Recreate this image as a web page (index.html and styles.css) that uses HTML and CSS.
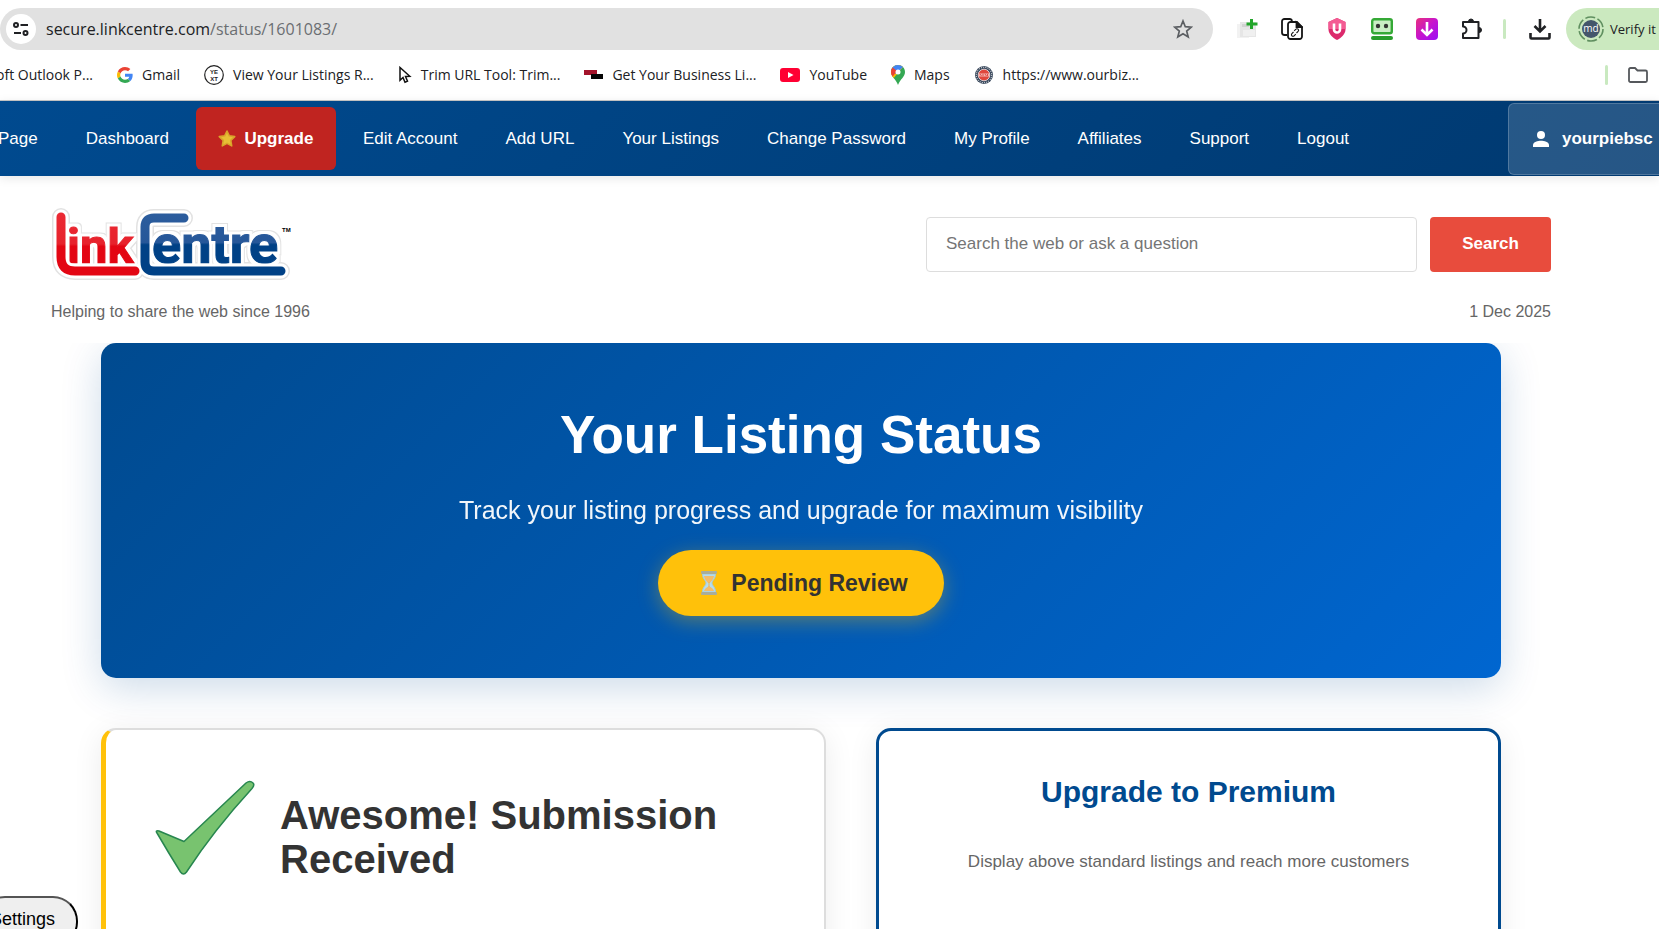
FILE: index.html
```html
<!DOCTYPE html>
<html lang="en">
<head>
<meta charset="utf-8">
<title>Your Listing Status</title>
<link rel="stylesheet" href="styles.css">
</head>
<body>
<div class="window">
  <div class="toolbar">
    <div class="address">
      <button class="site-info" aria-label="Site information">
        <svg width="16" height="16" viewBox="0 0 16 16" fill="none" stroke="#202124" stroke-width="2"><circle cx="3" cy="4" r="2"/><path d="M7.500 4H15M1 12h7"/><circle cx="12.500" cy="12" r="2"/></svg>
      </button>
      <span class="url">secure.linkcentre.com<span class="url-path">/status/1601083/</span></span>
      <svg class="bookmark-star" width="20" height="20" viewBox="0 0 20 20" fill="none" stroke="#5b5e62" stroke-width="1.700"><path d="M10 2l2.300 5.700 6 .5-4.600 3.900 1.500 5.900L10 14.800 4.800 18l1.500-5.900L1.700 8.200l6-.5z"/></svg>
    </div>
    <div class="extensions">
      <svg width="22" height="22" viewBox="0 0 22 22"><path d="M1 6h12v14H1z" fill="#f2f2f2"/><path d="M4 4h16v15H4z" fill="#e6e6e6"/><path d="M6 6h7v3H6z" fill="#d2d2d2"/><path d="M7 12h12v6H7z" fill="#f0f0f0"/><path d="M15.500 1v10M10.500 6h11" stroke="#23a52b" stroke-width="3"/></svg>
      <svg width="22" height="22" viewBox="0 0 22 22" fill="none" stroke="#151515" stroke-width="1.800"><path d="M6 17H3.500A2.500 2.500 0 0 1 1 14.500v-11A2.500 2.500 0 0 1 3.500 1h5A2.500 2.500 0 0 1 11 3"/><path d="M9.500 4H16l5 5v9.500a2.500 2.500 0 0 1-2.500 2.500h-9A2.500 2.500 0 0 1 7 18.500v-12A2.500 2.500 0 0 1 9.500 4z"/><path d="M15.500 4.500V9H21z" fill="#151515"/><path d="M12.500 14l-1.600 1.600a1.500 1.500 0 0 0 2.200 2.200l1.700-1.600M15.500 15l1.600-1.600a1.500 1.500 0 0 0-2.200-2.200l-1.700 1.600" stroke-width="1.100"/></svg>
      <svg width="22" height="22" viewBox="0 0 22 22"><path d="M11 0l8.500 4v7.500C19.500 16 15 20 11 22c-4-2-8.500-6-8.500-10.500V4z" fill="#dc2a6c"/><path d="M11 0l8.500 4v7H2.500V4z" fill="#f45b93"/><path d="M8 5.500v6a3 3 0 0 0 6 0v-6" fill="none" stroke="#fff" stroke-width="2.600"/></svg>
      <svg width="22" height="22" viewBox="0 0 22 22"><rect x="1.200" y="1.200" width="19.600" height="14" rx="2" fill="#c9edc4" stroke="#35a936" stroke-width="2.400"/><circle cx="7" cy="8" r="2.200" fill="#333"/><circle cx="15" cy="8" r="2.200" fill="#333"/><rect y="18" width="22" height="4" rx="2" fill="#289d2b"/></svg>
      <svg width="22" height="22" viewBox="0 0 22 22"><defs><linearGradient id="dl" x1="0" y1="0" x2="1" y2="1"><stop offset="0" stop-color="#e8307c"/><stop offset=".5" stop-color="#c614cf"/><stop offset="1" stop-color="#9a10f5"/></linearGradient></defs><rect width="22" height="22" rx="4" fill="url(#dl)"/><path d="M11 4v13M5.500 11.500L11 17l5.500-5.500" fill="none" stroke="#fff" stroke-width="2.600"/></svg>
      <svg width="22" height="22" viewBox="0 0 22 22" fill="none" stroke="#202124" stroke-width="2" stroke-linejoin="round"><path d="M2 4h15.500v16H2v-4.500a3 3 0 0 0 0-7z"/><path d="M7.500 3.500a2.500 2.500 0 0 1 5 0zM18 9.500a2.500 2.500 0 0 1 0 5z" fill="#202124" stroke-width="1"/></svg>
    </div>
    <span class="divider"></span>
    <svg class="download" width="22" height="22" viewBox="0 0 22 22" fill="none" stroke="#202124" stroke-width="2.600"><path d="M11 1v12M5.500 8L11 13.500 16.500 8M1.500 15v4.500a1 1 0 0 0 1 1h17a1 1 0 0 0 1-1V15"/></svg>
    <button class="profile">
      <svg width="26" height="26" viewBox="0 0 26 26"><circle cx="13" cy="13" r="12" fill="none" stroke="#5f8f5f" stroke-width="1.600" stroke-dasharray="10 2.600"/><circle cx="13" cy="13" r="9" fill="#44566b"/><text x="13" y="16" text-anchor="middle" class="avatar-text">md</text></svg>
      <span>Verify it</span>
    </button>
  </div>

  <div class="bookmarks">
    <a class="bookmark" href="#">oft Outlook P...</a>
    <a class="bookmark" href="#"><svg width="16" height="16" viewBox="0 0 48 48"><path fill="#EA4335" d="M24 9.500c3.540 0 6.710 1.220 9.210 3.600l6.850-6.850C35.900 2.380 30.470 0 24 0 14.620 0 6.510 5.380 2.560 13.220l7.980 6.190C12.430 13.720 17.740 9.500 24 9.500z"/><path fill="#4285F4" d="M46.980 24.550c0-1.570-.15-3.090-.38-4.550H24v9.020h12.940c-.58 2.960-2.260 5.480-4.780 7.180l7.730 6c4.510-4.180 7.090-10.360 7.090-17.650z"/><path fill="#FBBC05" d="M10.530 28.590c-.48-1.450-.76-2.990-.76-4.590s.27-3.140.76-4.590l-7.980-6.190C.92 16.460 0 20.120 0 24c0 3.880.92 7.540 2.560 10.780l7.970-6.190z"/><path fill="#34A853" d="M24 48c6.480 0 11.930-2.130 15.890-5.810l-7.730-6c-2.150 1.450-4.920 2.300-8.160 2.300-6.260 0-11.570-4.220-13.470-9.910l-7.980 6.190C6.510 42.620 14.620 48 24 48z"/></svg>Gmail</a>
    <a class="bookmark" href="#"><svg width="20" height="20" viewBox="0 0 20 20"><circle cx="10" cy="10" r="9.300" fill="#fff" stroke="#222" stroke-width="1.200"/><text x="10" y="9" text-anchor="middle" class="badge-text">YE</text><text x="10" y="16" text-anchor="middle" class="badge-text">XT</text></svg>View Your Listings R...</a>
    <a class="bookmark" href="#"><svg width="14" height="18" viewBox="0 0 14 18" fill="#fff" stroke="#111" stroke-width="1.500"><path d="M2 1.500v12.800l3-2.800 2 4.800 2.500-1.100-2-4.700 4.300-.2z"/></svg>Trim URL Tool: Trim...</a>
    <a class="bookmark" href="#"><svg width="19" height="10" viewBox="0 0 19 10"><rect width="13" height="5" fill="#a3142b"/><rect x="7" y="4" width="12" height="5" fill="#060606"/></svg>Get Your Business Li...</a>
    <a class="bookmark" href="#"><svg width="20" height="14" viewBox="0 0 20 14"><rect width="20" height="14" rx="3" fill="#ff0033"/><path d="M8 4l5.500 3L8 10z" fill="#fff"/></svg>YouTube</a>
    <a class="bookmark" href="#"><svg width="14" height="20" viewBox="0 0 14 20"><path d="M7 0C3 0 0 3 0 7c0 5 5 7 7 13 2-6 7-8 7-13 0-4-3-7-7-7z" fill="#34a853"/><path d="M0 7c0 2.600 1.300 4.300 2.700 6L12 2C10.700.8 9 0 7 0 3 0 0 3 0 7z" fill="#fbbc04"/><path d="M.3 5L5 9l7-7C10.700.8 9 0 7 0 3.700 0 1 2 .3 5z" fill="#4285f4"/><path d="M0 7c0-1.800.6-3.400 1.600-4.600L6 6 1.800 11.500C.7 10.200 0 8.800 0 7z" fill="#ea4335"/><circle cx="7" cy="7" r="2.500" fill="#fff"/></svg>Maps</a>
    <a class="bookmark" href="#"><svg width="20" height="20" viewBox="0 0 20 20"><circle cx="10" cy="10" r="9" fill="#3b4a5e"/><circle cx="10" cy="10" r="7.700" fill="none" stroke="#fff" stroke-width="1" stroke-dasharray="1 1.200"/><circle cx="10" cy="10" r="5.800" fill="#e0473c" stroke="#fff" stroke-width=".7"/><rect x="4.500" y="8.500" width="11" height="3" fill="#f3b4ae"/><path d="M6 9l1.500 2M9 9v2M11 9l1.500 2M13.500 9v2" stroke="#d8322c" stroke-width=".8"/></svg>https://www.ourbiz...</a>
    <div class="all-bookmarks">
      <span class="divider"></span>
      <svg width="20" height="16" viewBox="0 0 20 16" fill="none" stroke="#55585c" stroke-width="1.800"><path d="M1 13.500v-11A1.500 1.500 0 0 1 2.500 1H7l2.500 2.500h8A1.500 1.500 0 0 1 19 5v8.500a1.500 1.500 0 0 1-1.500 1.500h-15A1.500 1.500 0 0 1 1 13.500z"/></svg>
    </div>
  </div>

  <nav class="nav">
    <a class="nav-link nav-first" href="#">Page</a>
    <a class="nav-link" href="#">Dashboard</a>
    <a class="upgrade" href="#"><svg width="18" height="18" viewBox="0 0 18 18"><path d="M9 1l2.300 4.800 5.400.8-3.900 3.800.9 5.500L9 13.400l-4.700 2.500.9-5.500L1.300 6.600l5.400-.8z" fill="#e8bf35" stroke="#d9a52b" stroke-width="1.600" stroke-linejoin="round"/></svg>Upgrade</a>
    <a class="nav-link" href="#">Edit Account</a>
    <a class="nav-link" href="#">Add URL</a>
    <a class="nav-link" href="#">Your Listings</a>
    <a class="nav-link" href="#">Change Password</a>
    <a class="nav-link" href="#">My Profile</a>
    <a class="nav-link" href="#">Affiliates</a>
    <a class="nav-link" href="#">Support</a>
    <a class="nav-link" href="#">Logout</a>
    <a class="user" href="#"><svg width="16" height="16" viewBox="0 0 16 16" fill="#fff"><circle cx="8" cy="4" r="4"/><path d="M0 16v-2c0-3 5-4.300 8-4.300s8 1.300 8 4.300v2z"/></svg>yourpiebsc</a>
  </nav>

  <header class="header">
    <div class="header-row">
      <a class="logo" href="#" aria-label="LinkCentre">
        <svg width="242" height="76" viewBox="0 0 242 76">
          <defs>
            <linearGradient id="red" x1="0" y1="0" x2="0" y2="76" gradientUnits="userSpaceOnUse"><stop offset="0" stop-color="#ec2b35"/><stop offset=".5" stop-color="#e7222c"/><stop offset=".53" stop-color="#e30613"/><stop offset="1" stop-color="#e30613"/></linearGradient>
            <linearGradient id="blue" x1="0" y1="0" x2="0" y2="76" gradientUnits="userSpaceOnUse"><stop offset="0" stop-color="#2d5e9e"/><stop offset=".48" stop-color="#265799"/><stop offset=".51" stop-color="#004186"/><stop offset="1" stop-color="#004186"/></linearGradient>
            <filter id="rim" x="-10%" y="-20%" width="120%" height="140%" color-interpolation-filters="sRGB">
              <feMorphology in="SourceAlpha" operator="dilate" radius="4" result="outer"/>
              <feFlood flood-color="#e2e2e2"/><feComposite in2="outer" operator="in" result="grey"/>
              <feMorphology in="SourceAlpha" operator="dilate" radius="3" result="inner"/>
              <feFlood flood-color="#ffffff"/><feComposite in2="inner" operator="in" result="white"/>
              <feMerge><feMergeNode in="grey"/><feMergeNode in="white"/><feMergeNode in="SourceGraphic"/></feMerge>
            </filter>
            <path id="swoosh-left" d="M10 11v40q0 14 14 14h60"/>
            <path id="swoosh-right" d="M133 12h-30q-9 0-9 9v35q0 9 9 9h127"/>
          </defs>
          <g class="rim"><use href="#swoosh-left"/><use href="#swoosh-right"/></g>
          <text x="16" y="57" class="word-red" filter="url(#rim)">ink</text>
          <text x="101" y="57" class="word-blue" filter="url(#rim)">entre</text>
          <g class="halo"><use href="#swoosh-left"/><use href="#swoosh-right"/></g>
          <use href="#swoosh-left" stroke="url(#red)"/>
          <use href="#swoosh-right" stroke="url(#blue)"/>
          <text x="231" y="26" class="tm">TM</text>
        </svg>
      </a>
      <form class="search">
        <input type="text" aria-label="Search" placeholder="Search the web or ask a question">
        <button type="button">Search</button>
      </form>
    </div>
    <div class="tagline"><span>Helping to share the web since 1996</span><span>1 Dec 2025</span></div>
  </header>

  <main class="main">
    <section class="hero">
      <h1>Your Listing Status</h1>
      <p>Track your listing progress and upgrade for maximum visibility</p>
      <div class="status">
        <svg width="18" height="24" viewBox="0 0 18 24"><path d="M2.500 3h13c0 5-3.500 6.500-3.500 9s3.500 4 3.500 9h-13c0-5 3.500-6.500 3.500-9S2.500 8 2.500 3z" fill="#b5dcee" stroke="#a5cbd6"/><path d="M4 5h10c-.5 4-3 5-4 7H8C7 10 4.500 9 4 5zM9 15c2.500 1.500 4.500 3 5 5H4c.5-2 2.500-3.500 5-5z" fill="#f3bd6a"/><path d="M8.500 11h1v5h-1z" fill="#f0b350"/><rect x="1" y="0" width="16" height="3" rx="1" fill="#a9ad9a"/><rect x="1" y="21" width="16" height="3" rx="1" fill="#a9ad9a"/></svg>
        Pending Review
      </div>
    </section>
    <div class="cards">
      <section class="card card-status">
        <svg width="102" height="100" viewBox="0 0 102 100"><path d="M3 53q-2-3 2-2l25 10.500L92 3q4-3 7 0 2 2-1 5.500Q60 50 32.500 92q-3 4-6 0Q14 72 3 53z" fill="#78c36f" stroke="#27864f" stroke-width="1.500" stroke-linejoin="round"/></svg>
        <h2>Awesome! Submission Received</h2>
      </section>
      <section class="card card-premium">
        <h2>Upgrade to Premium</h2>
        <p>Display above standard listings and reach more customers</p>
      </section>
    </div>
  </main>
  <button class="settings">Settings</button>
</div>
</body>
</html>
```
FILE: styles.css
```css
* { box-sizing: border-box; }
body { margin: 0; background: #fff; font-family: "Liberation Sans", Arial, sans-serif; color: #333; }
a { color: inherit; text-decoration: none; }
button { font: inherit; cursor: pointer; }
h1, h2, p { margin: 0; }
svg { flex: none; display: block; }
.window { position: relative; height: 100vh; overflow: hidden; display: flex; flex-direction: column; }
.window > * { flex: none; }

/* Browser chrome */
.toolbar { display: flex; align-items: center; height: 50px; padding-top: 8px; font-family: "Open Sans", "Noto Sans", sans-serif; }
.address { flex: 1; display: flex; align-items: center; height: 42px; padding: 0 20px 0 6px; border-radius: 21px; background: #e1e1e1; }
.site-info { display: flex; align-items: center; justify-content: center; width: 30px; height: 30px; padding: 0; border: 0; border-radius: 50%; background: #fff; }
.url { flex: 1; margin-left: 10px; font-size: 16px; line-height: 24px; color: #202124; }
.url-path { color: #6b6e72; }
.extensions { display: flex; gap: 23px; margin-left: 23px; }
.divider { width: 3px; height: 20px; border-radius: 2px; background: #c9e9c0; }
.toolbar > .divider { margin: 0 23px 0 20px; }
.download { margin-right: 15px; }
.profile { display: flex; align-items: center; gap: 6px; width: 93px; height: 42px; padding: 0 0 0 12px; border: 0; border-radius: 21px 0 0 21px; background: #cbe9bf; font-size: 13px; color: #202124; white-space: nowrap; }
.avatar-text { font: 10px "Open Sans", sans-serif; fill: #fff; }
.bookmarks { display: flex; align-items: center; gap: 24px; height: 51px; margin-left: -4px; border-bottom: 1px solid #c8c8c8; font: 14px/20px "Open Sans", "Noto Sans", sans-serif; color: #202124; }
.bookmark { display: flex; align-items: center; gap: 9px; white-space: nowrap; }
.badge-text { font: bold 6px "Liberation Sans", sans-serif; fill: #222; }
.all-bookmarks { display: flex; align-items: center; gap: 20px; margin-left: auto; padding-right: 11px; }

/* Site navigation */
.nav { position: relative; z-index: 2; display: flex; align-items: center; height: 75px; background: linear-gradient(135deg, #004a8f, #003970); box-shadow: 0 2px 10px rgba(0, 0, 0, .1); color: #fff; font-size: 17px; }
.nav-link { padding: 0 24px; white-space: nowrap; }
.nav-first { margin-left: -2px; padding-left: 0; }
.upgrade { display: flex; align-items: center; justify-content: center; gap: 8px; width: 140px; height: 63px; margin: 0 3px; border-radius: 6px; background: #c02420; font-weight: bold; }
.user { display: flex; align-items: center; gap: 13px; width: 151px; height: 72px; margin-left: auto; padding-left: 24px; border: 1px solid rgba(255, 255, 255, .2); border-right: 0; border-radius: 6px 0 0 6px; background: rgba(255, 255, 255, .15); font-weight: bold; font-size: 17px; }

/* Header */
.header { position: relative; z-index: 1; padding: 30px 108px 21px 51px; background: #fff; }
.header-row { display: flex; align-items: center; justify-content: space-between; }
.search { display: flex; gap: 13px; width: 625px; }
.search input { flex: 1; min-width: 0; height: 55px; padding: 0 19px; border: 1px solid #ddd; border-radius: 4px; font: 17px "Liberation Sans", Arial, sans-serif; }
.search input::placeholder { color: #757575; }
.search button { width: 121px; border: 0; border-radius: 4px; background: #e84c3d; color: #fff; font-weight: bold; font-size: 17px; }
.tagline { display: flex; justify-content: space-between; margin-top: 20px; font-size: 16px; line-height: 20px; color: #666; }
.logo use { fill: none; stroke-linecap: round; stroke-width: 9px; }
.logo .rim use { stroke: #e2e2e2; stroke-width: 18px; }
.logo .halo use { stroke: #fff; stroke-width: 15px; }
.word-red { font: bold 49px Roboto, sans-serif; fill: url(#red); stroke: url(#red); stroke-width: 1px; }
.word-blue { font: bold 54px Roboto, sans-serif; fill: url(#blue); stroke: url(#blue); stroke-width: 1px; }
.tm { font: bold 6px "Liberation Sans", sans-serif; }

/* Content */
.main { padding: 0 158px 0 101px; }
.hero { display: flex; flex-direction: column; align-items: center; padding: 60px 50px 62px; border-radius: 15px; background: linear-gradient(135deg, #004a8f, #0066d0); box-shadow: 0 10px 40px rgba(0, 74, 143, .2); color: #fff; text-align: center; }
.hero h1 { font-size: 53px; line-height: 64px; }
.hero p { margin-top: 26px; font-size: 25px; line-height: 34px; opacity: .95; }
.status { display: flex; align-items: center; gap: 13px; height: 66px; margin-top: 23px; padding: 0 36px 0 42px; border-radius: 33px; background: #ffc10a; box-shadow: 0 5px 20px rgba(255, 193, 7, .35); color: #333; font-weight: bold; font-size: 23px; }
.cards { display: grid; grid-template-columns: 29fr 25fr; gap: 50px; margin-top: 50px; }
.card { min-height: 320px; border-radius: 15px; background: #fff; box-shadow: 0 5px 30px rgba(0, 0, 0, .08); }
.card-status { display: flex; align-items: flex-start; gap: 24px; padding: 50px 48px; border: 2px solid #ddd; border-left: 5px solid #ffc10a; }
.card-status h2 { padding-top: 13px; font-size: 40px; line-height: 44px; }
.card-premium { padding: 41px 40px; border: 3px solid #004a8f; text-align: center; }
.card-premium h2 { font-size: 30px; line-height: 40px; color: #004a8f; }
.card-premium p { margin-top: 38px; font-size: 17px; line-height: 24px; color: #666; }
.settings { position: absolute; left: -20px; bottom: -18px; z-index: 3; height: 51px; padding: 0 21px 4px 8px; border: 2px outset #000; border-radius: 25px; background: #efefef; color: #000; font-size: 18px; }
```
